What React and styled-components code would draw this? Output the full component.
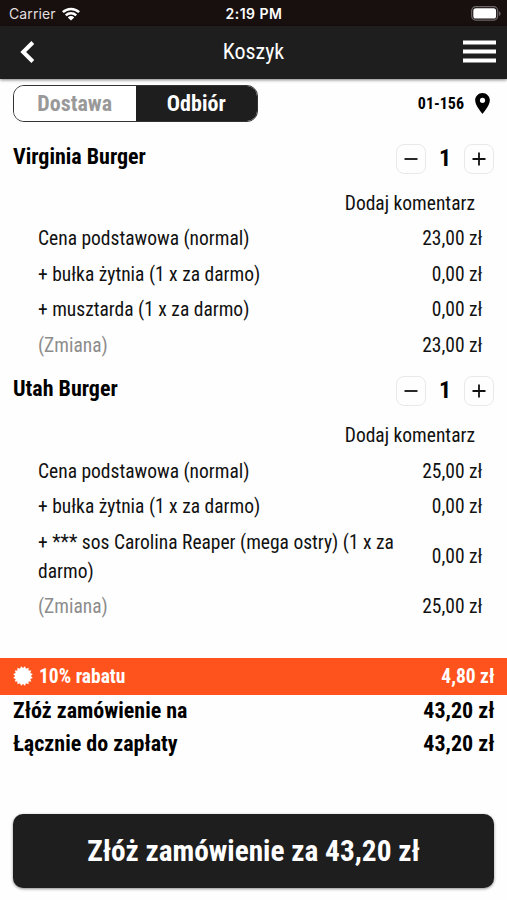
import { useState } from "react";
import styled, { createGlobalStyle } from "styled-components";

const items = [
  {
    name: 'Virginia Burger',
    total: '23,00 zł',
    lines: [
      { label: 'Cena podstawowa (normal)', price: '23,00 zł' },
      { label: '+ bułka żytnia (1 x za darmo)', price: '0,00 zł' },
      { label: '+ musztarda (1 x za darmo)', price: '0,00 zł' },
    ]
  },
  {
    name: 'Utah Burger',
    total: '25,00 zł',
    lines: [
      { label: 'Cena podstawowa (normal)', price: '25,00 zł' },
      { label: '+ bułka żytnia (1 x za darmo)', price: '0,00 zł' },
      { label: '+ *** sos Carolina Reaper (mega ostry) (1 x za darmo)', price: '0,00 zł' },
    ]
  },
]

// zigzag circle for the discount badge
const badgePoints = Array.from({ length: 32 }, (_, i) => {
  const r = i % 2 ? 10 : 7.9
  const a = (i * Math.PI) / 16
  return `${(10 + r * Math.sin(a)).toFixed(2)},${(10 - r * Math.cos(a)).toFixed(2)}`
}).join(' ')

function CartItem({ item }) {
  const [count, setCount] = useState(1)

  return (
    <Item>
      <ItemHeader>
        <ItemName>{item.name}</ItemName>
        <Quantity>
          <QuantityButton aria-label="Mniej" onClick={() => setCount(Math.max(0, count - 1))}>
            <svg width="14" height="14" viewBox="0 0 14 14"><path d="M0.5 7H13.5" stroke="#111" strokeWidth="1.8" /></svg>
          </QuantityButton>
          <Count>{count}</Count>
          <QuantityButton aria-label="Więcej" onClick={() => setCount(count + 1)}>
            <svg width="14" height="14" viewBox="0 0 14 14"><path d="M0.5 7H13.5M7 0.5V13.5" stroke="#111" strokeWidth="1.8" /></svg>
          </QuantityButton>
        </Quantity>
      </ItemHeader>
      <Comment>Dodaj komentarz</Comment>
      {item.lines.map((line) => (
        <Line key={line.label}>
          <Label>{line.label}</Label>
          <span>{line.price}</span>
        </Line>
      ))}
      <Line>
        <Label $muted>(Zmiana)</Label>
        <span>{item.total}</span>
      </Line>
    </Item>
  )
}

export default function App() {
  const [mode, setMode] = useState('pickup') // delivery, pickup

  return (
    <>
      <GlobalStyle />
      <Screen>
        <StatusBar>
          <Carrier>
            Carrier
            <svg width="18" height="14" viewBox="0 0 18 14" fill="none" stroke="#fff" strokeWidth="2.5">
              <path d="M0.9 5.2A11.6 11.6 0 0 1 17.1 5.2" />
              <path d="M3.8 8.3A7.4 7.4 0 0 1 14.2 8.3" />
              <path d="M9 13.6L5.8 10.4A4.6 4.6 0 0 1 12.2 10.4Z" fill="#fff" stroke="none" />
            </svg>
          </Carrier>
          <Time>2:19 PM</Time>
          <Battery>
            <svg width="30" height="15" viewBox="0 0 30 15">
              <rect x="0.7" y="0.7" width="26" height="13.4" rx="4" fill="none" stroke="#6d6868" strokeWidth="1.2" />
              <rect x="2.3" y="2.3" width="22.8" height="10.2" rx="2.6" fill="#fff" />
              <path d="M28 5.2C30 6 30 9 28 9.8Z" fill="#6d6868" />
            </svg>
          </Battery>
        </StatusBar>
        <NavBar>
          <BackButton aria-label="Wstecz">
            <svg width="14" height="22" viewBox="0 0 14 22"><path d="M12.8 1.5L3.2 11L12.8 20.5" fill="none" stroke="#fff" strokeWidth="4" /></svg>
          </BackButton>
          <Title>Koszyk</Title>
          <MenuButton aria-label="Menu">
            <svg width="33" height="23" viewBox="0 0 33 23"><path d="M0 2.5H33M0 11.5H33M0 20.5H33" stroke="#fff" strokeWidth="3.8" /></svg>
          </MenuButton>
        </NavBar>
        <Toolbar>
          <Switch>
            <SwitchOption $active={mode === 'delivery'} onClick={() => setMode('delivery')}>Dostawa</SwitchOption>
            <SwitchOption $active={mode === 'pickup'} onClick={() => setMode('pickup')}>Odbiór</SwitchOption>
          </Switch>
          <PostCode>
            01-156
            <svg width="15" height="21" viewBox="0 0 14 20"><path fill="#000" fillRule="evenodd" d="M7 0C3.1 0 0 3.1 0 7c0 5.2 7 13 7 13s7-7.8 7-13c0-3.9-3.1-7-7-7zm0 9.5a2.5 2.5 0 1 1 0-5 2.5 2.5 0 0 1 0 5z" /></svg>
          </PostCode>
        </Toolbar>
        {items.map((item) => <CartItem key={item.name} item={item} />)}
        <Spacer />
        <Discount>
          <svg width="20" height="20" viewBox="0 0 20 20"><polygon points={badgePoints} fill="#fff" /></svg>
          <DiscountLabel>10% rabatu</DiscountLabel>
          <span>4,80 zł</span>
        </Discount>
        <Summary>
          <SummaryRow><span>Złóż zamówienie na</span><span>43,20 zł</span></SummaryRow>
          <SummaryRow><span>Łącznie do zapłaty</span><span>43,20 zł</span></SummaryRow>
        </Summary>
        <OrderButton>Złóż zamówienie za 43,20 zł</OrderButton>
      </Screen>
    </>
  )
}

const GlobalStyle = createGlobalStyle`
  * {
    box-sizing: border-box;
  }
  body {
    margin: 0;
    background: #fefefe;
  }
  button {
    padding: 0;
    border: none;
    background: none;
    font: inherit;
    letter-spacing: inherit;
    color: inherit;
  }
  svg {
    display: block;
    flex: none;
  }
`

const Screen = styled.div`
  height: 900px;
  display: flex;
  flex-direction: column;
  overflow: hidden;
  background: #fefefe;
  color: #111;
  font-family: 'Roboto Condensed', Roboto, sans-serif;
  font-stretch: 75%;
  font-size: 19.5px;
  line-height: 29px;
`

const StatusBar = styled.div`
  flex: none;
  height: 26px;
  padding: 1px 6px 0 9px;
  display: grid;
  grid-template-columns: 1fr auto 1fr;
  align-items: center;
  background: #180f0f;
  color: #fff;
  font-family: Inter, sans-serif;
  font-stretch: normal;
  font-size: 14px;
  line-height: 20px;
`

const Carrier = styled.div`
  display: flex;
  align-items: center;
  gap: 6px;
  letter-spacing: 0.1px;
  color: #e2dfdf;
`

const Time = styled.div`
  margin-left: -2px;
  font-weight: 600;
  letter-spacing: 0.5px;
`

const Battery = styled.div`
  display: flex;
  justify-content: flex-end;
`

const NavBar = styled.header`
  flex: none;
  height: 53px;
  padding: 0 11px 2px 20px;
  display: grid;
  grid-template-columns: 1fr auto 1fr;
  align-items: center;
  background: #1e1e1e;
  color: #fff;
  box-shadow: 0 1px 3px rgba(0, 0, 0, 0.5);
`

const BackButton = styled.button`
  justify-self: start;
`

const Title = styled.div`
  margin-right: 9px;
  font-size: 22px;
`

const MenuButton = styled.button`
  justify-self: end;
`

const Toolbar = styled.div`
  flex: none;
  height: 60px;
  padding: 6px 17px 0 13px;
  display: flex;
  justify-content: space-between;
  align-items: flex-start;
`

const Switch = styled.div`
  width: 245px;
  height: 37px;
  display: flex;
  border: 1px solid #333;
  border-radius: 11px;
  overflow: hidden;
`

const SwitchOption = styled.button`
  flex: 1;
  font-weight: 700;
  font-size: 22px;
  background: ${({ $active }) => $active ? '#1e1e1e' : '#fff'};
  color: ${({ $active }) => $active ? '#fff' : '#999'};
`

const PostCode = styled.div`
  height: 36px;
  display: flex;
  align-items: center;
  gap: 11px;
  font-weight: 700;
  font-size: 16px;
  color: #000;
`

const Item = styled.section`
  flex: none;
  padding: 0 12.5px 8.25px 13px;
`

const ItemHeader = styled.div`
  height: 46.5px;
  display: flex;
  justify-content: space-between;
  align-items: flex-start;
`

const ItemName = styled.div`
  padding-top: 2.5px;
  font-weight: 700;
  font-size: 22px;
  color: #000;
`

const Quantity = styled.div`
  padding: 4.5px 0.5px 0 0;
  display: flex;
  align-items: center;
`

const QuantityButton = styled.button`
  width: 30px;
  height: 30px;
  display: flex;
  align-items: center;
  justify-content: center;
  border: 1px solid #e9e9e9;
  border-radius: 8px;
`

const Count = styled.div`
  width: 38px;
  text-align: center;
  font-weight: 700;
  font-size: 24px;
  color: #000;
`

const Comment = styled.div`
  padding: 3.25px 19.5px 3.25px 0;
  text-align: right;
`

const Line = styled.div`
  padding: 3.25px 12px 3.25px 25px;
  display: flex;
  justify-content: space-between;
  align-items: center;
`

const Label = styled.div`
  max-width: 370px;
  color: ${({ $muted }) => $muted ? '#8c8c8c' : 'inherit'};
`

const Spacer = styled.div`
  flex: none;
  height: 25.5px;
`

const Discount = styled.div`
  flex: none;
  height: 36.5px;
  padding: 0 12.5px 0 13px;
  display: flex;
  align-items: center;
  gap: 6px;
  background: #ff531d;
  color: #fff;
  font-weight: 700;
`

const DiscountLabel = styled.div`
  flex: 1;
`

const Summary = styled.div`
  flex: none;
  margin-top: -1px;
  padding: 0 12.5px 0 13px;
  font-weight: 700;
  font-size: 22px;
  line-height: 33px;
  color: #000;
`

const SummaryRow = styled.div`
  display: flex;
  justify-content: space-between;
`

const OrderButton = styled.button`
  && {
    flex: none;
    height: 73.5px;
    margin: 54.5px 13px 0;
    border-radius: 10px;
    background: #1e1e1e;
    color: #fff;
    font-weight: 700;
    font-size: 29.3px;
    line-height: 36px;
    box-shadow: 0 1px 3px rgba(0, 0, 0, 0.45);
  }
`
